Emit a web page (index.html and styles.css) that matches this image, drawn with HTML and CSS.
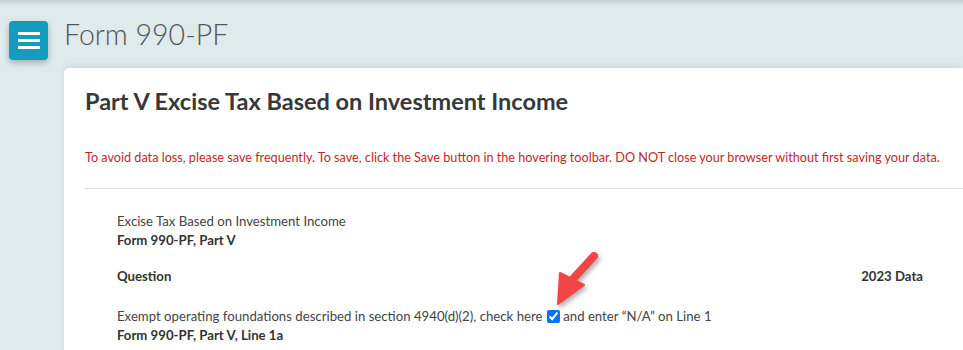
FILE: index.html
```html
<!DOCTYPE html>
<html>
<head>
  <meta charset="utf-8">
  <title>Form 990-PF</title>
  <link rel="stylesheet" href="styles.css">
</head>
<body>
  <div class="topbar"></div>
  <div class="header">
    <button class="menu-btn">
      <span></span><span></span><span></span>
    </button>
    <h1 class="page-title">Form 990-PF</h1>
  </div>
  <div class="card">
    <h2 class="part-title">Part V Excise Tax Based on Investment Income</h2>
    <p class="warning">To avoid data loss, please save frequently. To save, click the Save button in the hovering toolbar. DO NOT close your browser without first saving your data.</p>
    <hr>
    <div class="section">
      <div class="section-name">Excise Tax Based on Investment Income</div>
      <div class="ref">Form 990-PF, Part V</div>

      <div class="table-head">
        <span>Question</span>
        <span>2023 Data</span>
      </div>

      <div class="question">
        Exempt operating foundations described in section 4940(d)(2), check here
        <span class="check-wrap">
          <input type="checkbox" checked>
          <!-- callout arrow pointing at the checkbox -->
          <svg class="arrow" width="60" height="66" viewBox="0 0 60 66">
            <line x1="47" y1="10" x2="25" y2="34" stroke="#f34545" stroke-width="8" stroke-linecap="round"/>
            <polygon points="11,58 37,39 13,27" fill="#f34545" stroke="#f34545" stroke-width="2" stroke-linejoin="round"/>
          </svg>
        </span>
        and enter “N/A” on Line 1
      </div>
      <div class="ref">Form 990-PF, Part V, Line 1a</div>
    </div>
  </div>
</body>
</html>
```

FILE: styles.css
```css
body {
  margin: 0;
  background-color: #dfeaec;
  font-family: "Source Sans Pro", "Lato", sans-serif;
  color: #444;
  overflow: hidden;
}
.topbar {
  height: 6px;
  background: linear-gradient(#c3cfd1, #dfeaec);
}
.header {
  display: flex;
  align-items: center;
  padding: 14px 0 0 9px;
  height: 40px;
}
.menu-btn {
  width: 39px;
  height: 39px;
  border: 0;
  border-radius: 4px;
  background-color: #139dbc;
  box-shadow: 0 3px 6px rgba(0, 0, 0, 0.25);
  display: flex;
  flex-direction: column;
  justify-content: center;
  align-items: center;
  gap: 4px;
  padding: 0;
}
.menu-btn span {
  display: block;
  width: 22px;
  height: 3px;
  background-color: #fff;
}
.page-title {
  margin: 0 0 0 16px;
  font-weight: 300;
  font-size: 28.5px;
  color: #555;
  position: relative;
  top: -6px;
}
.card {
  margin: 8px 0 0 64px;
  background-color: #fff;
  border-radius: 5px 0 0 0;
  box-shadow: 0 -2px 6px rgba(0, 0, 0, 0.08);
  padding: 19px 0 0 21px;
  height: 300px;
}
.part-title {
  margin: 0;
  font-size: 23.5px;
  font-weight: 700;
  color: #383838;
}
.warning {
  margin: 35px 0 0 0;
  font-size: 12.65px;
  color: #c2262d;
}
hr {
  margin: 23px 0 0 0;
  border: 0;
  border-top: 1px solid #ddd;
}
.section {
  padding: 23px 40px 0 32px;
  font-size: 13.2px;
}
.section-name {
  line-height: 19px;
}
.ref {
  font-weight: 700;
  line-height: 19px;
  color: #333;
}
.table-head {
  display: flex;
  justify-content: space-between;
  font-weight: 700;
  color: #333;
  margin-top: 17px;
  line-height: 19px;
}
.question {
  margin-top: 21px;
  line-height: 19px;
}
.check-wrap {
  position: relative;
}
.check-wrap input {
  width: 13px;
  height: 13px;
  margin: 0 0 0 1px;
  vertical-align: -2px;
}
.arrow {
  position: absolute;
  left: 1px;
  top: -62px;
  filter: drop-shadow(2px 3px 2px rgba(0, 0, 0, 0.3));
}
```
